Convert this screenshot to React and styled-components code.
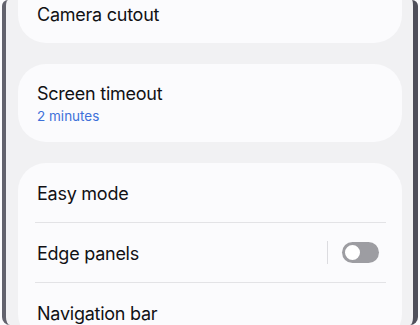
import React, { useState } from 'react';
import styled, { createGlobalStyle } from 'styled-components';

const GlobalStyle = createGlobalStyle`
  html, body {
    margin: 0;
    padding: 0;
    background: #fbfbfd;
  }
  body {
    font-family: "Inter", "Roboto", sans-serif;
    -webkit-font-smoothing: antialiased;
  }
`;

const Phone = styled.div`
  width: 420px;
  height: 325px;
  overflow: hidden;
  display: flex;
`;

const Screen = styled.div`
  margin-left: 2px;
  width: 416px;
  height: 325px;
  border-left: 4px solid #62626d;
  border-right: 5px solid #4f4f5a;
  border-radius: 6px 6px 8px 8px;
  background: #f1f1f3;
  padding: 0 11px 0 12px;
  box-sizing: border-box;
  overflow: hidden;
  display: flex;
  flex-direction: column;
  gap: 21px;
`;

const Card = styled.div`
  background: #fbfbfd;
  border-radius: ${(p) => (p.$cut ? '0 0 28px 28px' : '28px')};
  flex-shrink: 0;
`;

const Row = styled.div`
  height: ${(p) => p.$h || 59}px;
  margin: 0 16px 0 17px;
  padding: 2px 0 0 2px;
  display: flex;
  align-items: ${(p) => (p.$top ? 'flex-start' : 'center')};
  justify-content: space-between;
  border-top: ${(p) => (p.$divider ? '1px solid #e3e3e6' : 'none')};
  box-sizing: border-box;
`;

const Labels = styled.div`
  display: flex;
  flex-direction: column;
  gap: 3px;
`;

const Title = styled.div`
  font-size: 18px;
  color: #111114;
  letter-spacing: -0.25px;
  line-height: 22px;
  margin-top: ${(p) => p.$mt || 0}px;
`;

const Sub = styled.div`
  font-size: 13.5px;
  color: #3d70d9;
  line-height: 17px;
`;

const SwitchWrap = styled.div`
  display: flex;
  align-items: center;
  gap: 14px;
  margin: -2px 7px 0 0;
`;

const VLine = styled.div`
  width: 1px;
  height: 23px;
  background: #dcdce0;
`;

const Track = styled.button`
  width: 37px;
  height: 21px;
  border-radius: 11px;
  border: none;
  padding: 0;
  background: ${(p) => (p.$on ? '#3e72e0' : '#9d9da2')};
  position: relative;
  cursor: pointer;
`;

const Knob = styled.span`
  position: absolute;
  top: 1px;
  left: ${(p) => (p.$on ? '17px' : '1px')};
  width: 15px;
  height: 15px;
  border-radius: 50%;
  background: #fff;
  border: 2px solid ${(p) => (p.$on ? '#3e72e0' : '#9d9da2')};
`;

export default function App() {
  const [edge, setEdge] = useState(false);

  return (
    <>
      <GlobalStyle />
      <Phone>
        <Screen>
          <Card $cut>
            <Row $h={43} $top>
              <Title $mt={2}>Camera cutout</Title>
            </Row>
          </Card>
          <Card>
            <Row $h={78}>
              <Labels>
                <Title>Screen timeout</Title>
                <Sub>2 minutes</Sub>
              </Labels>
            </Row>
          </Card>
          <Card>
            <Row $h={59}>
              <Title>Easy mode</Title>
            </Row>
            <Row $h={60} $divider>
              <Title>Edge panels</Title>
              <SwitchWrap>
                <VLine />
                <Track $on={edge} onClick={() => setEdge(!edge)}>
                  <Knob $on={edge} />
                </Track>
              </SwitchWrap>
            </Row>
            <Row $h={60} $divider>
              <Title>Navigation bar</Title>
            </Row>
          </Card>
        </Screen>
      </Phone>
    </>
  );
}
